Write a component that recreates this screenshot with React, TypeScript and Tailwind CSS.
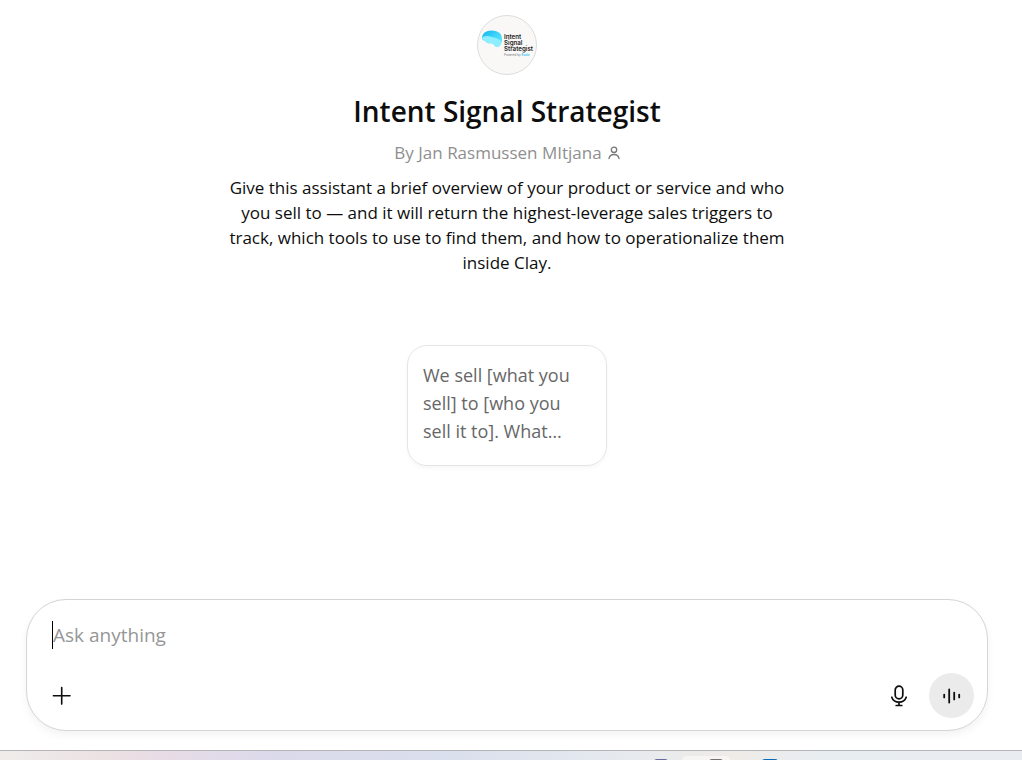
import { useState } from 'react';

const Avatar = () => (
  <svg viewBox="0 0 60 60" className="h-[60px] w-[60px]" role="img" aria-label="Intent Signal Strategist logo">
    <defs>
      <linearGradient id="cloud" x1="0" y1="0" x2="1" y2="1">
        <stop offset="0" stopColor="#12b5ee" />
        <stop offset="0.5" stopColor="#3fd5fb" />
        <stop offset="1" stopColor="#6feaff" />
      </linearGradient>
    </defs>
    <circle cx="30" cy="30" r="29.5" fill="#f9f8f7" stroke="#dcdcdc" />
    <path d="M5 23c0-4.500 4-7.500 9.500-7.500 7 0 11 3.500 10.500 9.500-.3 4-2.500 7-5 7-2.200 0-2.500-2.500-4.500-3.500-2-.8-3 .3-5-.5-1.500-.6-1.500-2-3-2.500-1.600-.4-2.500-1-2.500-2.500z" fill="url(#cloud)" />
    <path d="M5 23c1-2 4-2.500 7-1.800 4 .8 8 1.500 12.500 5-.5 3.600-2.300 5.800-4.500 5.800-2.200 0-2.500-2.500-4.500-3.500-2-.8-3 .3-5-.5-1.500-.6-1.500-2-3-2.500C5.900 25.100 5 24.500 5 23z" fill="#8deeff" />
    <g className="font-['Inter']" fontWeight="600" fill="#1b1b1b" fontSize="6.200">
      <text x="27" y="24">Intent</text>
      <text x="27" y="30">Signal</text>
      <text x="27" y="36">Strategist</text>
    </g>
    <g className="font-['Inter']" fontSize="3">
      <text x="27" y="40.500" fill="#777">Powered by</text>
      <text x="44.500" y="40.500" fill="#36c6f2" fontWeight="bold">Evolv</text>
    </g>
  </svg>
);

const PersonIcon = () => (
  <svg viewBox="0 0 12 14" className="h-3.5 w-3" fill="none" stroke="#777777" strokeWidth="1.300" strokeLinecap="round" aria-hidden="true">
    <circle cx="6" cy="3.800" r="2.700" />
    <path d="M1 12.500c.5-2.600 2.400-4 5-4s4.500 1.400 5 4" />
  </svg>
);

const PlusIcon = () => (
  <svg viewBox="0 0 20 20" className="h-5 w-5" fill="none" stroke="currentColor" strokeWidth="1.600" strokeLinecap="round" aria-hidden="true">
    <path d="M9.700 1.500v16.600M1.400 9.800h16.600" />
  </svg>
);

const MicIcon = () => (
  <svg viewBox="0 0 18 22" className="h-[22px] w-[18px]" fill="none" stroke="currentColor" strokeWidth="1.700" strokeLinecap="round" aria-hidden="true">
    <rect x="5.200" y="1.200" width="7.600" height="12.600" rx="3.800" />
    <path d="M1.800 12.200c1 3 3.800 4.900 7.200 4.900s6.200-1.900 7.200-4.900M9 17.200v3.200M6.200 20.500h5.600" />
  </svg>
);

const VoiceIcon = () => (
  <svg viewBox="0 0 18 18" className="h-[18px] w-[18px]" fill="none" stroke="currentColor" strokeWidth="1.800" strokeLinecap="round" aria-hidden="true">
    <path d="M1.200 7.600v2.800M6.200 2.400v13.200M11.200 5.600v6.800M16.200 7.600v2.800" />
  </svg>
);

const Composer = () => {
  const [message, setMessage] = useState('');

  return (
    <form
      className="mx-[26px] mb-[19px] rounded-[40px] border border-[#d5d5d5] bg-white px-[13px] pb-3 pt-[19px] shadow-[0_4px_8px_rgba(0,0,0,0.05)]"
      onSubmit={(event) => event.preventDefault()}
    >
      <div className="flex items-center px-3">
        <span className="h-7 w-px bg-black" />
        <input
          aria-label="Ask anything"
          placeholder="Ask anything"
          className="h-8 min-w-0 flex-1 bg-transparent text-[19px] text-black outline-none placeholder:text-[#969696]"
          value={message}
          onChange={(event) => setMessage(event.target.value)}
        />
      </div>
      <div className="mt-[22px] flex items-center justify-between">
        <button type="button" aria-label="Add files" className="flex h-11 w-11 items-center justify-center">
          <PlusIcon />
        </button>
        <div className="flex items-center gap-2">
          <button type="button" aria-label="Dictate" className="flex h-11 w-11 items-center justify-center">
            <MicIcon />
          </button>
          <button
            type="button"
            aria-label="Use voice mode"
            className="flex h-[45px] w-[45px] items-center justify-center rounded-full bg-[#ebebeb]"
          >
            <VoiceIcon />
          </button>
        </div>
      </div>
    </form>
  );
};

const Taskbar = () => (
  <div className="h-[10px] overflow-hidden border-t border-[#b5b5b7] bg-[linear-gradient(90deg,#efedea_0%,#ecdfe3_12%,#e4dbe8_19%,#dadaeb_28%,#dbe0ed_45%,#e7ebef_62%,#efebe7_72%,#e8edf1_80%,#e9edf1_100%)]">
    <div className="ml-[calc(50%+143px)] flex items-start pt-[5px]">
      <span className="mt-[3px] h-4 w-3.5 rounded-t-[3px] bg-[#6769a0]" />
      <span className="ml-3.5 flex h-10 w-12 items-start justify-center rounded-t bg-[#f6f5f3] pl-5">
        <span className="mt-[3px] h-4 w-3.5 rounded-t-[3px] bg-[#776f70]" />
      </span>
      <span className="ml-8 mt-[3px] h-4 w-4 rounded-t-[3px] bg-[#0b6bbb]" />
    </div>
  </div>
);

export default function App() {
  return (
    <div className="flex min-h-screen flex-col bg-white font-['Open_Sans',sans-serif] text-[#0d0d0d]">
      <div className="flex flex-1 flex-col pr-2">
        <main className="flex flex-1 flex-col items-center px-4 pt-[15px] text-center">
          <Avatar />
          <h1 className="mt-4 text-[28px] font-semibold leading-10">Intent Signal Strategist</h1>
          <div className="mt-[10px] flex items-center gap-1.5 text-[17px] leading-6 text-[#8f8f8f]">
            <span>By Jan Rasmussen MItjana</span>
            <PersonIcon />
          </div>
          <p className="mt-[10px] max-w-[560px] text-[17px] leading-[25px]">
            Give this assistant a brief overview of your product or service and who you sell to — and it will return the
            highest-leverage sales triggers to track, which tools to use to find them, and how to operationalize them
            inside Clay.
          </p>
          <button
            type="button"
            className="mt-[70px] w-[200px] rounded-[20px] border border-[#e5e5e5] px-[15px] pb-5 pt-[15px] text-left text-[18px] leading-7 text-[#676767] shadow-[0_2px_4px_rgba(0,0,0,0.04)]"
          >
            We sell [what you sell] to [who you sell it to]. What…
          </button>
        </main>
        <Composer />
      </div>
      <Taskbar />
    </div>
  );
}
